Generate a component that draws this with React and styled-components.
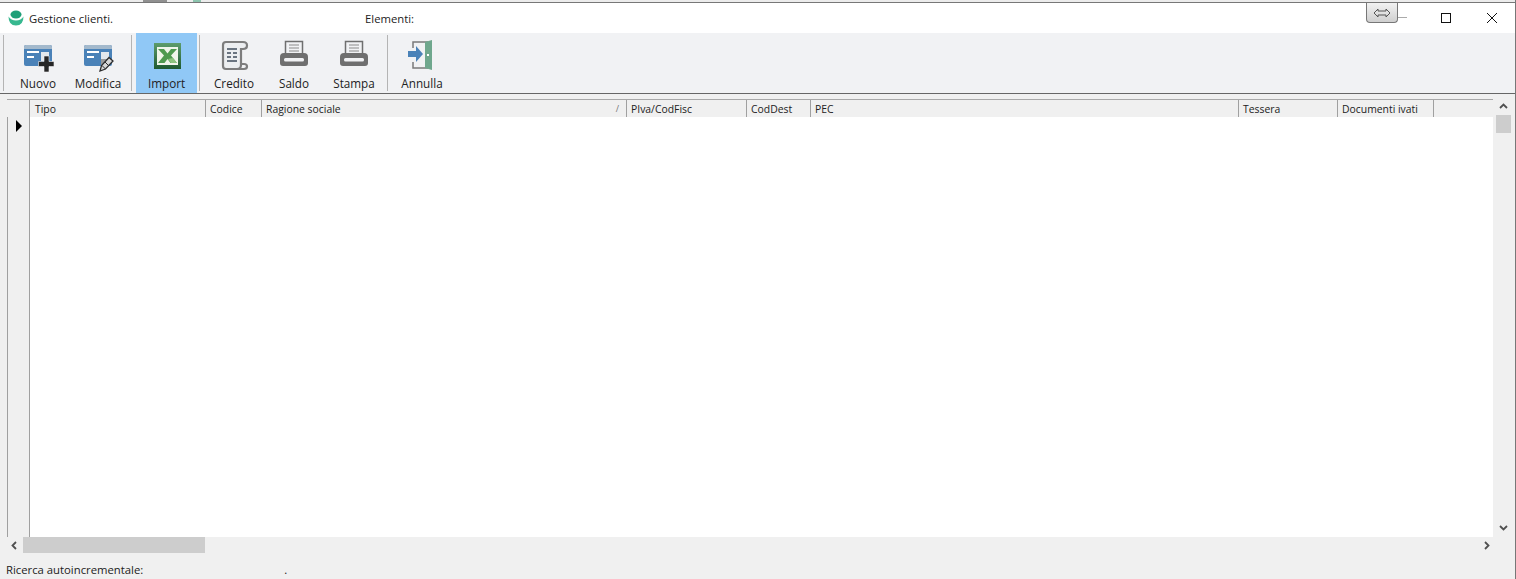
import React from "react";
import styled, { createGlobalStyle } from "styled-components";

const GlobalStyle = createGlobalStyle`
    html, body {
        margin: 0;
        padding: 0;
        background: #f0f0f0;
    }
    #root {
        height: 579px;
    }
`;

const Window = styled.div`
    position: relative;
    width: 1516px;
    height: 579px;
    display: flex;
    flex-direction: column;
    overflow: hidden;
    background: #f0f0f0;
    color: #222;
    font-family: "Open Sans", "Noto Sans", sans-serif;
    font-size: 11.3px;
    box-sizing: border-box;
    border-right: 1px solid #777;
`;

const TopStrip = styled.div`
    height: 3px;
    flex: none;
    box-sizing: border-box;
    display: flex;
    background: #ececec;
    border-bottom: 1px solid #777;
`;

const StripBit = styled.div`
    width: ${(p) => p.$width}px;
    margin-left: ${(p) => p.$left}px;
    background: ${(p) => p.$color};
`;

const TitleBar = styled.div`
    height: 30px;
    flex: none;
    display: flex;
    align-items: center;
    background: #fff;
    padding-left: 8px;
`;

const TitleText = styled.span`
    margin-left: ${(p) => p.$left}px;
    width: ${(p) => p.$width}px;
    flex: none;
`;

const WindowButtons = styled.div`
    margin-left: auto;
    display: flex;
    align-items: center;
`;

const WindowButton = styled.div`
    width: 46px;
    height: 30px;
    display: flex;
    align-items: center;
    justify-content: center;
`;

const DockButton = styled.div`
    position: absolute;
    left: 1366px;
    top: 3px;
    width: 30px;
    height: 19px;
    border: 1px solid #777;
    border-top: none;
    border-radius: 0 0 4px 4px;
    background: linear-gradient(#f2f2f2, #cfcfcf);
    display: flex;
    align-items: center;
    justify-content: center;
`;

const DockDash = styled.div`
    position: absolute;
    left: 1398px;
    top: 17px;
    width: 9px;
    height: 1px;
    background: #aaa;
`;

const Toolbar = styled.div`
    height: 61px;
    flex: none;
    box-sizing: border-box;
    display: flex;
    background: #f1f2f4;
    border-bottom: 1px solid #666;
    padding-left: 3px;
`;

const Separator = styled.div`
    width: 1px;
    height: 56px;
    margin: 2px ${(p) => p.$right}px 0 ${(p) => p.$left}px;
    background: #b4b4b4;
    flex: none;
`;

const ToolButton = styled.div`
    width: ${(p) => p.$width || 60}px;
    flex: none;
    display: flex;
    flex-direction: column;
    align-items: center;
    background: ${(p) => (p.$active ? "#90c8f6" : "transparent")};
    svg {
        margin-top: 5px;
        display: block;
    }
`;

const ToolLabel = styled.span`
    margin-top: 1px;
    line-height: 16px;
    font-size: 11.7px;
    white-space: nowrap;
`;

const GridArea = styled.div`
    flex: 1;
    display: flex;
    min-height: 0;
    padding: 5px 4px 0 7px;
`;

const Grid = styled.div`
    flex: 1;
    display: flex;
    flex-direction: column;
    min-width: 0;
`;

const HeaderRow = styled.div`
    height: 18px;
    flex: none;
    display: flex;
    background: #f0f0f0;
    border-top: 1px solid #a8a8a8;
    box-sizing: border-box;
`;

const HeaderCell = styled.div`
    width: ${(p) => p.$width}px;
    flex: none;
    box-sizing: border-box;
    padding-left: ${(p) => p.$pad || 4}px;
    border-right: ${(p) => (p.$last ? "none" : "1px solid #a0a0a0")};
    display: flex;
    justify-content: space-between;
    font-size: 10.4px;
    line-height: 18px;
    white-space: nowrap;
`;

const SortMark = styled.span`
    color: #777;
    margin-right: 7px;
    font-size: 9px;
`;

const GridBody = styled.div`
    flex: 1;
    display: flex;
    min-height: 0;
`;

const IndicatorColumn = styled.div`
    width: 23px;
    flex: none;
    box-sizing: border-box;
    background: #f0f0f0;
    border-right: 1px solid #a0a0a0;
    border-left: 1px solid #a0a0a0;
    display: flex;
    justify-content: center;
    svg {
        margin-top: 3px;
    }
`;

const Rows = styled.div`
    flex: 1;
    background: #fff;
`;

const VScroll = styled.div`
    width: 16px;
    flex: none;
    margin-left: 2px;
    display: flex;
    flex-direction: column;
    align-items: center;
    padding-top: 3px;
    height: 430px;
`;

const VThumb = styled.div`
    width: 15px;
    height: 18px;
    margin-top: 4px;
    background: #cdcdcd;
`;

const VSpacer = styled.div`
    flex: 1;
`;

const HScroll = styled.div`
    height: 16px;
    flex: none;
    display: flex;
    align-items: center;
    padding-left: 10px;
    padding-right: 24px;
    justify-content: space-between;
`;

const HTrack = styled.div`
    flex: 1;
    display: flex;
    height: 16px;
    margin: 0 8px 0 4px;
`;

const HThumb = styled.div`
    width: 182px;
    background: #cdcdcd;
`;

const StatusBar = styled.div`
    height: 26px;
    flex: none;
    box-sizing: border-box;
    display: flex;
    align-items: flex-end;
    padding: 0 0 1px 6px;
    line-height: 16px;
`;

const StatusDot = styled.span`
    margin-left: 141px;
`;

const columns = [
    { label: "Tipo", width: 176, pad: 5 },
    { label: "Codice", width: 56 },
    { label: "Ragione sociale", width: 365, sorted: true },
    { label: "PIva/CodFisc", width: 120 },
    { label: "CodDest", width: 64 },
    { label: "PEC", width: 428 },
    { label: "Tessera", width: 99 },
    { label: "Documenti ivati", width: 96 },
    { label: "", width: 59, last: true },
];

const ToolIcon = ({ children }) => (
    <svg width="32" height="36" viewBox="0 0 32 36">
        {children}
    </svg>
);

const CardShape = () => (
    <>
        <path d="M2 9q0-2 2-2h24q2 0 2 2v17q0 2-2 2H4q-2 0-2-2z" fill="#4a82b8" />
        <path d="M2 9q0-2 2-2h24q2 0 2 2v2H2z" fill="#a3b9cc" />
        <rect x="5" y="13" width="12" height="2" fill="#fff" />
        <rect x="5" y="18" width="7" height="2" fill="#fff" />
        <rect x="19" y="14" width="8" height="9" fill="#e4e8ec" />
    </>
);

const NewIcon = () => (
    <ToolIcon>
        <CardShape />
        <path d="M22 18h5v5.500h5v5h-5V34h-5v-5.500h-5.500v-5H22z" fill="#262626" stroke="#f1f2f4" strokeWidth="0.600" />
    </ToolIcon>
);

const EditIcon = () => (
    <ToolIcon>
        <CardShape />
        <path d="M19 21h8v7h-8z" fill="#9a9a9a" />
        <path d="M18 33l1.500-5.500L27 19.500l4 3.500-7.500 8z" fill="#d8d8d8" stroke="#2e2e2e" strokeWidth="1.300" />
        <path d="M20 27.500l3.500 3.500M23 24l3.500 3.500" stroke="#2e2e2e" strokeWidth="1" />
    </ToolIcon>
);

const ExcelIcon = () => (
    <ToolIcon>
        <defs>
            <linearGradient id="xlFrame" x1="0" y1="0" x2="0" y2="1">
                <stop offset="0" stopColor="#5d9c6c" />
                <stop offset="1" stopColor="#1f5a30" />
            </linearGradient>
        </defs>
        <rect x="3" y="5" width="27" height="26" fill="url(#xlFrame)" />
        <rect x="6" y="9" width="21" height="18" fill="#f0f5ea" />
        <path d="M7 11h6l3.500 4.500L20 11h6l-6 6.500 6 7.500h-6.500l-3-4-3 4H7l6-7.500z" fill="#4f9a4f" />
        <path d="M17 21l3 4h6l-4-5z" fill="#8cc47e" />
    </ToolIcon>
);

const ScrollIcon = () => (
    <ToolIcon>
        <path d="M5 7q0-3 3-3h17q4 0 4 3.500T25 11h-2v16q0 4-4 4H8q-3 0-3-3z" fill="#eceef0" stroke="#7d7d7d" strokeWidth="2.200" />
        <path d="M23 26h3q3 0 3 2.500T26 31H18" fill="none" stroke="#7d7d7d" strokeWidth="2.200" />
        <path d="M9 11h10M9 15h4M15 15h4M9 19h4M15 19h4M9 23h10" stroke="#6a7480" strokeWidth="2" />
    </ToolIcon>
);

const PrinterIcon = () => (
    <ToolIcon>
        <rect x="7.500" y="3.500" width="17" height="13" fill="#f1f2f4" stroke="#6f6f6f" strokeWidth="1.500" />
        <path d="M11 7h10M11 10h10M11 13h10" stroke="#8a8a8a" strokeWidth="1" />
        <path d="M2 19q0-4 4-4h20q4 0 4 4v6q0 3-3 3H5q-3 0-3-3z" fill="#6f6f6f" />
        <rect x="6" y="20" width="20" height="3.500" rx="1.500" fill="#f1f2f4" />
    </ToolIcon>
);

const DoorIcon = () => (
    <ToolIcon>
        <path d="M7 10V4h15M7 24v6h15" fill="none" stroke="#7a7a7a" strokeWidth="1.500" />
        <path d="M19 4l7-2v30l-7-2z" fill="#6fa78d" />
        <rect x="21" y="16" width="2" height="2" fill="#fff" />
        <path d="M2 13h8V8l7 8-7 8v-5H2z" fill="#4a82b8" />
    </ToolIcon>
);

const AppLogo = () => (
    <svg width="16" height="16" viewBox="0 0 16 16">
        <ellipse cx="8" cy="4.500" rx="5.500" ry="4" fill="#1f9f78" />
        <path d="M0.500 6.500Q3 10.500 8 10.500t7.500-4Q15.500 15.500 8 15.500T0.500 6.500z" fill="#37b88f" />
    </svg>
);

const Chevron = ({ d }) => (
    <svg width="9" height="9" viewBox="0 0 9 9">
        <path d={d} fill="none" stroke="#505050" strokeWidth="1.800" />
    </svg>
);

export default function App() {
    return (
        <Window>
            <GlobalStyle />
            <TopStrip>
                <StripBit $left={143} $width={24} $color="#909090" />
                <StripBit $left={26} $width={8} $color="#8cc4ae" />
            </TopStrip>
            <TitleBar>
                <AppLogo />
                <TitleText $left={5} $width={336}>Gestione clienti.</TitleText>
                <TitleText $left={0} $width={60}>Elementi:</TitleText>
                <WindowButtons>
                    <WindowButton>
                        <svg width="10" height="10" viewBox="0 0 10 10">
                            <rect x="0.500" y="0.500" width="9" height="9" fill="none" stroke="#111" />
                        </svg>
                    </WindowButton>
                    <WindowButton>
                        <svg width="10" height="10" viewBox="0 0 10 10">
                            <path d="M0 0l10 10M10 0L0 10" stroke="#111" strokeWidth="1" />
                        </svg>
                    </WindowButton>
                </WindowButtons>
            </TitleBar>
            <DockButton>
                <svg width="18" height="10" viewBox="0 0 18 10">
                    <path d="M1 5l4-4v2h8V1l4 4-4 4V7H5v2z" fill="none" stroke="#555" />
                </svg>
            </DockButton>
            <DockDash />

            <Toolbar>
                <Separator $left={0} $right={4} />
                <ToolButton><NewIcon /><ToolLabel>Nuovo</ToolLabel></ToolButton>
                <ToolButton><EditIcon /><ToolLabel>Modifica</ToolLabel></ToolButton>
                <Separator $left={3} $right={4} />
                <ToolButton $active $width={61}><ExcelIcon /><ToolLabel>Import</ToolLabel></ToolButton>
                <Separator $left={2} $right={4} />
                <ToolButton><ScrollIcon /><ToolLabel>Credito</ToolLabel></ToolButton>
                <ToolButton><PrinterIcon /><ToolLabel>Saldo</ToolLabel></ToolButton>
                <ToolButton><PrinterIcon /><ToolLabel>Stampa</ToolLabel></ToolButton>
                <Separator $left={3} $right={4} />
                <ToolButton><DoorIcon /><ToolLabel>Annulla</ToolLabel></ToolButton>
            </Toolbar>

            <GridArea>
                <Grid>
                    <HeaderRow>
                        <HeaderCell $width={23} />
                        {columns.map((col) => (
                            <HeaderCell key={col.label} $width={col.width} $last={col.last} $pad={col.pad}>
                                {col.label}
                                {col.sorted && <SortMark>/</SortMark>}
                            </HeaderCell>
                        ))}
                    </HeaderRow>
                    <GridBody>
                        <IndicatorColumn>
                            <svg width="8" height="12" viewBox="0 0 8 12">
                                <path d="M1 0l6 6-6 6z" fill="#000" />
                            </svg>
                        </IndicatorColumn>
                        <Rows />
                    </GridBody>
                </Grid>
                <VScroll>
                    <Chevron d="M1 6l3.500-3.500L8 6" />
                    <VThumb />
                    <VSpacer />
                    <Chevron d="M1 3l3.500 3.500L8 3" />
                </VScroll>
            </GridArea>

            <HScroll>
                <Chevron d="M6 1L2.500 4.500 6 8" />
                <HTrack><HThumb /></HTrack>
                <Chevron d="M3 1l3.500 3.500L3 8" />
            </HScroll>
            <StatusBar>
                Ricerca autoincrementale:
                <StatusDot>.</StatusDot>
            </StatusBar>
        </Window>
    );
}
